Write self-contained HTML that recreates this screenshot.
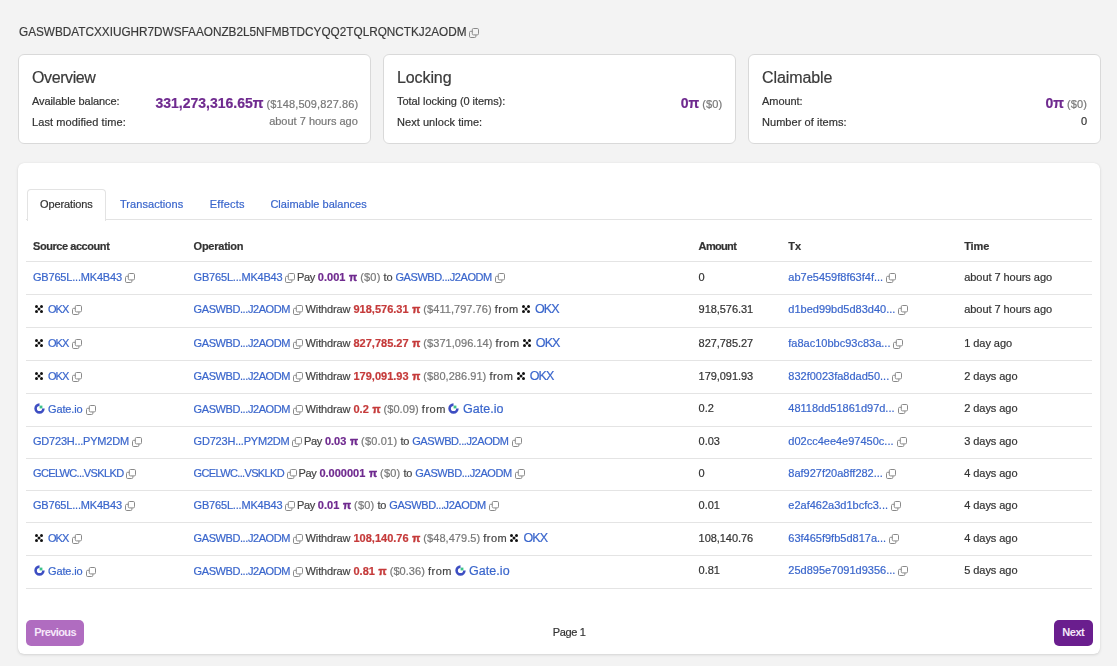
<!DOCTYPE html>
<html><head><meta charset="utf-8"><style>
html,body{margin:0;padding:0;}
body{width:1117px;height:666px;background:#f3f3f3;position:relative;overflow:hidden;font-family:"Liberation Sans", sans-serif;}
#wrap{position:absolute;left:0;top:0;width:1117px;height:666px;filter:blur(0.3px);}
.t{position:absolute;white-space:nowrap;-webkit-text-stroke:0.2px currentColor;}
.ic{position:absolute;line-height:0;}
.card{position:absolute;top:54px;width:351px;height:88px;background:#fff;border:1px solid #d9d9d9;border-radius:6px;}
.main{position:absolute;left:18px;top:163px;width:1082px;height:490.5px;background:#fff;border-radius:5px;border-radius:6px;box-shadow:0 0 1px rgba(0,0,0,0.12), 0 1px 3px rgba(0,0,0,0.13);}
.navline{position:absolute;left:26px;top:219px;width:1066px;height:1px;background:#e3e3e3;}
.tab{position:absolute;left:26.5px;top:189.4px;width:77.8px;height:31px;background:#fff;border-left:1px solid #e3e3e3;border-top:1px solid #e3e3e3;border-right:1px solid #e3e3e3;border-radius:4px 4px 0 0;}
.hl{position:absolute;left:26px;width:1066px;height:1px;background:#e4e4e4;}
.lk{color:#3a66cc;}
.pu{color:#6f2a8f;}
.rd{color:#c53a3a;}
.pi{font-size:10.5px;margin-left:0.6px;-webkit-text-stroke:0.5px currentColor;}
.gr{color:#777;}
svg.cp{display:inline-block;vertical-align:-1.5px;margin-left:3px;}
.ib{display:inline-block;width:12px;margin-right:3px;text-align:center;line-height:0;}
.ib svg{vertical-align:-1px;}
.btn{position:absolute;top:619.8px;height:26px;border-radius:5px;font-size:11px;line-height:25.5px;text-align:center;font-weight:700;}
.prev{left:26.2px;width:58px;background:#b06cc0;color:#f6e6fa;letter-spacing:-0.6px;}
.next{left:1054px;width:38.5px;background:#6a1e8e;color:#f4e8f8;letter-spacing:-0.5px;}
</style></head>
<body><div id="wrap">
<div class="t" style="left:19px;top:24.90px;font-size:13px;line-height:13px;color:#3a3a3a;transform:scaleX(0.905);transform-origin:0 0;">GASWBDATCXXIUGHR7DWSFAAONZB2L5NFMBTDCYQQ2TQLRQNCTKJ2AODM</div>
<div class="ic" style="left:466px;top:28.3px"><svg class="cp" width="10" height="10" viewBox="0 0 10 10"><rect x="0.5" y="3.3" width="6.4" height="6.2" rx="1.2" fill="#f3f3f3" stroke="#8a8a8a" stroke-width="1"/><rect x="3.3" y="0.5" width="6.2" height="6.4" rx="1.2" fill="#f3f3f3" stroke="#8a8a8a" stroke-width="1"/></svg></div>
<div class="card" style="left:18px"></div>
<div class="card" style="left:383px"></div>
<div class="card" style="left:748px"></div>
<div class="t" style="top:70px;font-size:16px;line-height:16px;color:#3a3a3a;font-weight:400;letter-spacing:-0.4px;left:32.00px;">Overview</div>
<div class="t" style="top:96px;font-size:11px;line-height:11px;color:#333;font-weight:400;letter-spacing:-0.09px;left:32.00px;">Available balance:</div>
<div class="t" style="top:117px;font-size:11px;line-height:11px;color:#333;font-weight:400;letter-spacing:0.08px;left:32.00px;">Last modified time:</div>
<div class="t" style="top:98px;font-size:11px;line-height:11px;color:#333;font-weight:400;right:758.80px;"><span style="font-size:14px;font-weight:700;color:#6f2a8f;letter-spacing:0">331,273,316.65π</span> <span style="color:#777;letter-spacing:0.1px">($148,509,827.86)</span></div>
<div class="t" style="top:116px;font-size:11px;line-height:11px;color:#777;font-weight:400;right:759.20px;">about 7 hours ago</div>
<div class="t" style="top:70px;font-size:16px;line-height:16px;color:#3a3a3a;font-weight:400;letter-spacing:-0.1px;left:397.00px;">Locking</div>
<div class="t" style="top:96px;font-size:11px;line-height:11px;color:#333;font-weight:400;letter-spacing:-0.05px;left:397.00px;">Total locking (0 items):</div>
<div class="t" style="top:117px;font-size:11px;line-height:11px;color:#333;font-weight:400;letter-spacing:0.05px;left:397.00px;">Next unlock time:</div>
<div class="t" style="top:98px;font-size:11px;line-height:11px;color:#333;font-weight:400;right:394.80px;"><span style="font-size:14px;font-weight:700;color:#6f2a8f;letter-spacing:0">0π</span> <span style="color:#777;letter-spacing:0.1px">($0)</span></div>
<div class="t" style="top:70px;font-size:16px;line-height:16px;color:#3a3a3a;font-weight:400;letter-spacing:-0.1px;left:762.00px;">Claimable</div>
<div class="t" style="top:96px;font-size:11px;line-height:11px;color:#333;font-weight:400;letter-spacing:-0.05px;left:762.00px;">Amount:</div>
<div class="t" style="top:117px;font-size:11px;line-height:11px;color:#333;font-weight:400;letter-spacing:0.05px;left:762.00px;">Number of items:</div>
<div class="t" style="top:98px;font-size:11px;line-height:11px;color:#333;font-weight:400;right:30.00px;"><span style="font-size:14px;font-weight:700;color:#6f2a8f;letter-spacing:0">0π</span> <span style="color:#777;letter-spacing:0.1px">($0)</span></div>
<div class="t" style="top:116px;font-size:11px;line-height:11px;color:#333;font-weight:400;right:30.00px;">0</div>
<div class="main"></div>
<div class="navline"></div>
<div class="tab"></div>
<div class="t" style="top:199px;font-size:11px;line-height:11px;color:#333;font-weight:400;letter-spacing:-0.12px;left:40.00px;">Operations</div>
<div class="t" style="top:199px;font-size:11px;line-height:11px;color:#3a66cc;font-weight:400;letter-spacing:0.06px;left:120.00px;">Transactions</div>
<div class="t" style="top:199px;font-size:11px;line-height:11px;color:#3a66cc;font-weight:400;letter-spacing:0.2px;left:209.80px;">Effects</div>
<div class="t" style="top:199px;font-size:11px;line-height:11px;color:#3a66cc;font-weight:400;letter-spacing:0.02px;left:270.40px;">Claimable balances</div>
<div class="t" style="top:241px;font-size:11px;line-height:11px;color:#333;font-weight:700;letter-spacing:-0.44px;left:33.00px;">Source account</div>
<div class="t" style="top:241px;font-size:11px;line-height:11px;color:#333;font-weight:700;letter-spacing:-0.25px;left:193.60px;">Operation</div>
<div class="t" style="top:241px;font-size:11px;line-height:11px;color:#333;font-weight:700;letter-spacing:-0.66px;left:698.60px;">Amount</div>
<div class="t" style="top:241px;font-size:11px;line-height:11px;color:#333;font-weight:700;left:788.30px;">Tx</div>
<div class="t" style="top:241px;font-size:11px;line-height:11px;color:#333;font-weight:700;letter-spacing:-0.1px;left:964.20px;">Time</div>
<div class="hl" style="top:261.35px"></div>
<div class="t" style="top:272px;font-size:11px;line-height:11px;color:#333;font-weight:400;left:33.00px;"><span class="lk" style="letter-spacing:-0.19px;">GB765L...MK4B43</span><svg class="cp" width="10" height="10" viewBox="0 0 10 10"><rect x="0.5" y="3.3" width="6.4" height="6.2" rx="1.2" fill="#fff" stroke="#8a8a8a" stroke-width="1"/><rect x="3.3" y="0.5" width="6.2" height="6.4" rx="1.2" fill="#fff" stroke="#8a8a8a" stroke-width="1"/></svg></div>
<div class="t" style="top:272px;font-size:11px;line-height:11px;color:#444;font-weight:400;left:193.60px;"><span class="lk" style="letter-spacing:-0.19px;">GB765L...MK4B43</span><svg class="cp" style="margin-right:-1.5px" width="10" height="10" viewBox="0 0 10 10"><rect x="0.5" y="3.3" width="6.4" height="6.2" rx="1.2" fill="#fff" stroke="#8a8a8a" stroke-width="1"/><rect x="3.3" y="0.5" width="6.2" height="6.4" rx="1.2" fill="#fff" stroke="#8a8a8a" stroke-width="1"/></svg> <span class="" style="letter-spacing:-0.4px;">Pay</span> <b class="pu">0.001 <span class="pi">π</span></b> <span class="gr" style="letter-spacing:0.2px;">($0)</span> <span class="" style="letter-spacing:-0.2px;">to</span> <span class="lk" style="letter-spacing:-0.42px;">GASWBD...J2AODM</span><svg class="cp" width="10" height="10" viewBox="0 0 10 10"><rect x="0.5" y="3.3" width="6.4" height="6.2" rx="1.2" fill="#fff" stroke="#8a8a8a" stroke-width="1"/><rect x="3.3" y="0.5" width="6.2" height="6.4" rx="1.2" fill="#fff" stroke="#8a8a8a" stroke-width="1"/></svg></div>
<div class="t" style="top:272px;font-size:11px;line-height:11px;color:#333;font-weight:400;letter-spacing:-0.05px;left:698.60px;">0</div>
<div class="t" style="top:272px;font-size:11px;line-height:11px;color:#333;font-weight:400;left:788.30px;"><span class="lk">ab7e5459f8f63f4f...</span><svg class="cp" width="10" height="10" viewBox="0 0 10 10"><rect x="0.5" y="3.3" width="6.4" height="6.2" rx="1.2" fill="#fff" stroke="#8a8a8a" stroke-width="1"/><rect x="3.3" y="0.5" width="6.2" height="6.4" rx="1.2" fill="#fff" stroke="#8a8a8a" stroke-width="1"/></svg></div>
<div class="t" style="top:272px;font-size:11px;line-height:11px;color:#333;font-weight:400;letter-spacing:-0.05px;left:964.20px;">about 7 hours ago</div>
<div class="hl" style="top:293.50px"></div>
<div class="t" style="top:304px;font-size:11px;line-height:11px;color:#333;font-weight:400;left:33.00px;"><span class="ib"><svg width="8" height="8" viewBox="0 0 8 8" style="vertical-align:0px"><g fill="#111"><circle cx="1.5" cy="1.5" r="1.5"/><circle cx="6.5" cy="1.5" r="1.5"/><circle cx="4" cy="4" r="1.5"/><circle cx="1.5" cy="6.5" r="1.5"/><circle cx="6.5" cy="6.5" r="1.5"/></g></svg></span><span class="lk" style="margin-right:1px;letter-spacing:-1.0px;">OKX</span><svg class="cp" width="10" height="10" viewBox="0 0 10 10"><rect x="0.5" y="3.3" width="6.4" height="6.2" rx="1.2" fill="#fff" stroke="#8a8a8a" stroke-width="1"/><rect x="3.3" y="0.5" width="6.2" height="6.4" rx="1.2" fill="#fff" stroke="#8a8a8a" stroke-width="1"/></svg></div>
<div class="t" style="top:304px;font-size:11px;line-height:11px;color:#444;font-weight:400;left:193.60px;"><span class="lk" style="letter-spacing:-0.42px;">GASWBD...J2AODM</span><svg class="cp" style="margin-right:-0.5px" width="10" height="10" viewBox="0 0 10 10"><rect x="0.5" y="3.3" width="6.4" height="6.2" rx="1.2" fill="#fff" stroke="#8a8a8a" stroke-width="1"/><rect x="3.3" y="0.5" width="6.2" height="6.4" rx="1.2" fill="#fff" stroke="#8a8a8a" stroke-width="1"/></svg> <span class="" style="letter-spacing:-0.12px;">Withdraw</span> <b class="rd">918,576.31 <span class="pi">π</span></b> <span class="gr" style="letter-spacing:0.05px;">($411,797.76)</span> <span class="" style="letter-spacing:0.5px;">from</span> <span class="ib" style="margin-left:-1.8px"><svg width="8" height="8" viewBox="0 0 8 8" style="vertical-align:0px"><g fill="#111"><circle cx="1.5" cy="1.5" r="1.5"/><circle cx="6.5" cy="1.5" r="1.5"/><circle cx="4" cy="4" r="1.5"/><circle cx="1.5" cy="6.5" r="1.5"/><circle cx="6.5" cy="6.5" r="1.5"/></g></svg></span><span class="lk" style="font-size:12.5px;letter-spacing:-0.9px;">OKX</span></div>
<div class="t" style="top:304px;font-size:11px;line-height:11px;color:#333;font-weight:400;letter-spacing:-0.05px;left:698.60px;">918,576.31</div>
<div class="t" style="top:304px;font-size:11px;line-height:11px;color:#333;font-weight:400;left:788.30px;"><span class="lk">d1bed99bd5d83d40...</span><svg class="cp" width="10" height="10" viewBox="0 0 10 10"><rect x="0.5" y="3.3" width="6.4" height="6.2" rx="1.2" fill="#fff" stroke="#8a8a8a" stroke-width="1"/><rect x="3.3" y="0.5" width="6.2" height="6.4" rx="1.2" fill="#fff" stroke="#8a8a8a" stroke-width="1"/></svg></div>
<div class="t" style="top:304px;font-size:11px;line-height:11px;color:#333;font-weight:400;letter-spacing:-0.05px;left:964.20px;">about 7 hours ago</div>
<div class="hl" style="top:326.50px"></div>
<div class="t" style="top:338px;font-size:11px;line-height:11px;color:#333;font-weight:400;left:33.00px;"><span class="ib"><svg width="8" height="8" viewBox="0 0 8 8" style="vertical-align:0px"><g fill="#111"><circle cx="1.5" cy="1.5" r="1.5"/><circle cx="6.5" cy="1.5" r="1.5"/><circle cx="4" cy="4" r="1.5"/><circle cx="1.5" cy="6.5" r="1.5"/><circle cx="6.5" cy="6.5" r="1.5"/></g></svg></span><span class="lk" style="margin-right:1px;letter-spacing:-1.0px;">OKX</span><svg class="cp" width="10" height="10" viewBox="0 0 10 10"><rect x="0.5" y="3.3" width="6.4" height="6.2" rx="1.2" fill="#fff" stroke="#8a8a8a" stroke-width="1"/><rect x="3.3" y="0.5" width="6.2" height="6.4" rx="1.2" fill="#fff" stroke="#8a8a8a" stroke-width="1"/></svg></div>
<div class="t" style="top:338px;font-size:11px;line-height:11px;color:#444;font-weight:400;left:193.60px;"><span class="lk" style="letter-spacing:-0.42px;">GASWBD...J2AODM</span><svg class="cp" style="margin-right:-0.5px" width="10" height="10" viewBox="0 0 10 10"><rect x="0.5" y="3.3" width="6.4" height="6.2" rx="1.2" fill="#fff" stroke="#8a8a8a" stroke-width="1"/><rect x="3.3" y="0.5" width="6.2" height="6.4" rx="1.2" fill="#fff" stroke="#8a8a8a" stroke-width="1"/></svg> <span class="" style="letter-spacing:-0.12px;">Withdraw</span> <b class="rd">827,785.27 <span class="pi">π</span></b> <span class="gr" style="letter-spacing:0.05px;">($371,096.14)</span> <span class="" style="letter-spacing:0.5px;">from</span> <span class="ib" style="margin-left:-1.8px"><svg width="8" height="8" viewBox="0 0 8 8" style="vertical-align:0px"><g fill="#111"><circle cx="1.5" cy="1.5" r="1.5"/><circle cx="6.5" cy="1.5" r="1.5"/><circle cx="4" cy="4" r="1.5"/><circle cx="1.5" cy="6.5" r="1.5"/><circle cx="6.5" cy="6.5" r="1.5"/></g></svg></span><span class="lk" style="font-size:12.5px;letter-spacing:-0.9px;">OKX</span></div>
<div class="t" style="top:338px;font-size:11px;line-height:11px;color:#333;font-weight:400;letter-spacing:-0.05px;left:698.60px;">827,785.27</div>
<div class="t" style="top:338px;font-size:11px;line-height:11px;color:#333;font-weight:400;left:788.30px;"><span class="lk">fa8ac10bbc93c83a...</span><svg class="cp" width="10" height="10" viewBox="0 0 10 10"><rect x="0.5" y="3.3" width="6.4" height="6.2" rx="1.2" fill="#fff" stroke="#8a8a8a" stroke-width="1"/><rect x="3.3" y="0.5" width="6.2" height="6.4" rx="1.2" fill="#fff" stroke="#8a8a8a" stroke-width="1"/></svg></div>
<div class="t" style="top:338px;font-size:11px;line-height:11px;color:#333;font-weight:400;letter-spacing:-0.05px;left:964.20px;">1 day ago</div>
<div class="hl" style="top:359.50px"></div>
<div class="t" style="top:371px;font-size:11px;line-height:11px;color:#333;font-weight:400;left:33.00px;"><span class="ib"><svg width="8" height="8" viewBox="0 0 8 8" style="vertical-align:0px"><g fill="#111"><circle cx="1.5" cy="1.5" r="1.5"/><circle cx="6.5" cy="1.5" r="1.5"/><circle cx="4" cy="4" r="1.5"/><circle cx="1.5" cy="6.5" r="1.5"/><circle cx="6.5" cy="6.5" r="1.5"/></g></svg></span><span class="lk" style="margin-right:1px;letter-spacing:-1.0px;">OKX</span><svg class="cp" width="10" height="10" viewBox="0 0 10 10"><rect x="0.5" y="3.3" width="6.4" height="6.2" rx="1.2" fill="#fff" stroke="#8a8a8a" stroke-width="1"/><rect x="3.3" y="0.5" width="6.2" height="6.4" rx="1.2" fill="#fff" stroke="#8a8a8a" stroke-width="1"/></svg></div>
<div class="t" style="top:371px;font-size:11px;line-height:11px;color:#444;font-weight:400;left:193.60px;"><span class="lk" style="letter-spacing:-0.42px;">GASWBD...J2AODM</span><svg class="cp" style="margin-right:-0.5px" width="10" height="10" viewBox="0 0 10 10"><rect x="0.5" y="3.3" width="6.4" height="6.2" rx="1.2" fill="#fff" stroke="#8a8a8a" stroke-width="1"/><rect x="3.3" y="0.5" width="6.2" height="6.4" rx="1.2" fill="#fff" stroke="#8a8a8a" stroke-width="1"/></svg> <span class="" style="letter-spacing:-0.12px;">Withdraw</span> <b class="rd">179,091.93 <span class="pi">π</span></b> <span class="gr" style="letter-spacing:0.05px;">($80,286.91)</span> <span class="" style="letter-spacing:0.5px;">from</span> <span class="ib" style="margin-left:-1.8px"><svg width="8" height="8" viewBox="0 0 8 8" style="vertical-align:0px"><g fill="#111"><circle cx="1.5" cy="1.5" r="1.5"/><circle cx="6.5" cy="1.5" r="1.5"/><circle cx="4" cy="4" r="1.5"/><circle cx="1.5" cy="6.5" r="1.5"/><circle cx="6.5" cy="6.5" r="1.5"/></g></svg></span><span class="lk" style="font-size:12.5px;letter-spacing:-0.9px;">OKX</span></div>
<div class="t" style="top:371px;font-size:11px;line-height:11px;color:#333;font-weight:400;letter-spacing:-0.05px;left:698.60px;">179,091.93</div>
<div class="t" style="top:371px;font-size:11px;line-height:11px;color:#333;font-weight:400;left:788.30px;"><span class="lk">832f0023fa8dad50...</span><svg class="cp" width="10" height="10" viewBox="0 0 10 10"><rect x="0.5" y="3.3" width="6.4" height="6.2" rx="1.2" fill="#fff" stroke="#8a8a8a" stroke-width="1"/><rect x="3.3" y="0.5" width="6.2" height="6.4" rx="1.2" fill="#fff" stroke="#8a8a8a" stroke-width="1"/></svg></div>
<div class="t" style="top:371px;font-size:11px;line-height:11px;color:#333;font-weight:400;letter-spacing:-0.05px;left:964.20px;">2 days ago</div>
<div class="hl" style="top:392.50px"></div>
<div class="t" style="top:403px;font-size:11px;line-height:11px;color:#333;font-weight:400;left:33.00px;"><span class="ib"><svg width="11" height="11" viewBox="0 0 11 11"><path d="M5.5 0.3 A5.2 5.2 0 1 0 10.7 5.5 L8.1 5.5 A2.6 2.6 0 1 1 5.5 2.9 Z" fill="#3d4ec2"/><rect x="5.6" y="2.6" width="2.8" height="2.8" fill="#3ec38c"/></svg></span><span class="lk" style="letter-spacing:-0.13px;">Gate.io</span><svg class="cp" width="10" height="10" viewBox="0 0 10 10"><rect x="0.5" y="3.3" width="6.4" height="6.2" rx="1.2" fill="#fff" stroke="#8a8a8a" stroke-width="1"/><rect x="3.3" y="0.5" width="6.2" height="6.4" rx="1.2" fill="#fff" stroke="#8a8a8a" stroke-width="1"/></svg></div>
<div class="t" style="top:403px;font-size:11px;line-height:11px;color:#444;font-weight:400;left:193.60px;"><span class="lk" style="letter-spacing:-0.42px;">GASWBD...J2AODM</span><svg class="cp" style="margin-right:-0.5px" width="10" height="10" viewBox="0 0 10 10"><rect x="0.5" y="3.3" width="6.4" height="6.2" rx="1.2" fill="#fff" stroke="#8a8a8a" stroke-width="1"/><rect x="3.3" y="0.5" width="6.2" height="6.4" rx="1.2" fill="#fff" stroke="#8a8a8a" stroke-width="1"/></svg> <span class="" style="letter-spacing:-0.12px;">Withdraw</span> <b class="rd">0.2 <span class="pi">π</span></b> <span class="gr" style="letter-spacing:0.05px;">($0.09)</span> <span class="" style="letter-spacing:0.5px;">from</span> <span class="ib" style="margin-left:-1px"><svg width="11" height="11" viewBox="0 0 11 11"><path d="M5.5 0.3 A5.2 5.2 0 1 0 10.7 5.5 L8.1 5.5 A2.6 2.6 0 1 1 5.5 2.9 Z" fill="#3d4ec2"/><rect x="5.6" y="2.6" width="2.8" height="2.8" fill="#3ec38c"/></svg></span><span class="lk" style="font-size:12.5px;letter-spacing:0.05px;">Gate.io</span></div>
<div class="t" style="top:403px;font-size:11px;line-height:11px;color:#333;font-weight:400;letter-spacing:-0.05px;left:698.60px;">0.2</div>
<div class="t" style="top:403px;font-size:11px;line-height:11px;color:#333;font-weight:400;left:788.30px;"><span class="lk">48118dd51861d97d...</span><svg class="cp" width="10" height="10" viewBox="0 0 10 10"><rect x="0.5" y="3.3" width="6.4" height="6.2" rx="1.2" fill="#fff" stroke="#8a8a8a" stroke-width="1"/><rect x="3.3" y="0.5" width="6.2" height="6.4" rx="1.2" fill="#fff" stroke="#8a8a8a" stroke-width="1"/></svg></div>
<div class="t" style="top:403px;font-size:11px;line-height:11px;color:#333;font-weight:400;letter-spacing:-0.05px;left:964.20px;">2 days ago</div>
<div class="hl" style="top:425.50px"></div>
<div class="t" style="top:436px;font-size:11px;line-height:11px;color:#333;font-weight:400;left:33.00px;"><span class="lk" style="letter-spacing:-0.21px;">GD723H...PYM2DM</span><svg class="cp" width="10" height="10" viewBox="0 0 10 10"><rect x="0.5" y="3.3" width="6.4" height="6.2" rx="1.2" fill="#fff" stroke="#8a8a8a" stroke-width="1"/><rect x="3.3" y="0.5" width="6.2" height="6.4" rx="1.2" fill="#fff" stroke="#8a8a8a" stroke-width="1"/></svg></div>
<div class="t" style="top:436px;font-size:11px;line-height:11px;color:#444;font-weight:400;left:193.60px;"><span class="lk" style="letter-spacing:-0.21px;">GD723H...PYM2DM</span><svg class="cp" style="margin-right:-1.5px" width="10" height="10" viewBox="0 0 10 10"><rect x="0.5" y="3.3" width="6.4" height="6.2" rx="1.2" fill="#fff" stroke="#8a8a8a" stroke-width="1"/><rect x="3.3" y="0.5" width="6.2" height="6.4" rx="1.2" fill="#fff" stroke="#8a8a8a" stroke-width="1"/></svg> <span class="" style="letter-spacing:-0.4px;">Pay</span> <b class="pu">0.03 <span class="pi">π</span></b> <span class="gr" style="letter-spacing:0.2px;">($0.01)</span> <span class="" style="letter-spacing:-0.2px;">to</span> <span class="lk" style="letter-spacing:-0.42px;">GASWBD...J2AODM</span><svg class="cp" width="10" height="10" viewBox="0 0 10 10"><rect x="0.5" y="3.3" width="6.4" height="6.2" rx="1.2" fill="#fff" stroke="#8a8a8a" stroke-width="1"/><rect x="3.3" y="0.5" width="6.2" height="6.4" rx="1.2" fill="#fff" stroke="#8a8a8a" stroke-width="1"/></svg></div>
<div class="t" style="top:436px;font-size:11px;line-height:11px;color:#333;font-weight:400;letter-spacing:-0.05px;left:698.60px;">0.03</div>
<div class="t" style="top:436px;font-size:11px;line-height:11px;color:#333;font-weight:400;left:788.30px;"><span class="lk">d02cc4ee4e97450c...</span><svg class="cp" width="10" height="10" viewBox="0 0 10 10"><rect x="0.5" y="3.3" width="6.4" height="6.2" rx="1.2" fill="#fff" stroke="#8a8a8a" stroke-width="1"/><rect x="3.3" y="0.5" width="6.2" height="6.4" rx="1.2" fill="#fff" stroke="#8a8a8a" stroke-width="1"/></svg></div>
<div class="t" style="top:436px;font-size:11px;line-height:11px;color:#333;font-weight:400;letter-spacing:-0.05px;left:964.20px;">3 days ago</div>
<div class="hl" style="top:457.65px"></div>
<div class="t" style="top:468px;font-size:11px;line-height:11px;color:#333;font-weight:400;left:33.00px;"><span class="lk" style="letter-spacing:-0.64px;">GCELWC...VSKLKD</span><svg class="cp" width="10" height="10" viewBox="0 0 10 10"><rect x="0.5" y="3.3" width="6.4" height="6.2" rx="1.2" fill="#fff" stroke="#8a8a8a" stroke-width="1"/><rect x="3.3" y="0.5" width="6.2" height="6.4" rx="1.2" fill="#fff" stroke="#8a8a8a" stroke-width="1"/></svg></div>
<div class="t" style="top:468px;font-size:11px;line-height:11px;color:#444;font-weight:400;left:193.60px;"><span class="lk" style="letter-spacing:-0.64px;">GCELWC...VSKLKD</span><svg class="cp" style="margin-right:-1.5px" width="10" height="10" viewBox="0 0 10 10"><rect x="0.5" y="3.3" width="6.4" height="6.2" rx="1.2" fill="#fff" stroke="#8a8a8a" stroke-width="1"/><rect x="3.3" y="0.5" width="6.2" height="6.4" rx="1.2" fill="#fff" stroke="#8a8a8a" stroke-width="1"/></svg> <span class="" style="letter-spacing:-0.4px;">Pay</span> <b class="pu">0.000001 <span class="pi">π</span></b> <span class="gr" style="letter-spacing:0.2px;">($0)</span> <span class="" style="letter-spacing:-0.2px;">to</span> <span class="lk" style="letter-spacing:-0.42px;">GASWBD...J2AODM</span><svg class="cp" width="10" height="10" viewBox="0 0 10 10"><rect x="0.5" y="3.3" width="6.4" height="6.2" rx="1.2" fill="#fff" stroke="#8a8a8a" stroke-width="1"/><rect x="3.3" y="0.5" width="6.2" height="6.4" rx="1.2" fill="#fff" stroke="#8a8a8a" stroke-width="1"/></svg></div>
<div class="t" style="top:468px;font-size:11px;line-height:11px;color:#333;font-weight:400;letter-spacing:-0.05px;left:698.60px;">0</div>
<div class="t" style="top:468px;font-size:11px;line-height:11px;color:#333;font-weight:400;left:788.30px;"><span class="lk">8af927f20a8ff282...</span><svg class="cp" width="10" height="10" viewBox="0 0 10 10"><rect x="0.5" y="3.3" width="6.4" height="6.2" rx="1.2" fill="#fff" stroke="#8a8a8a" stroke-width="1"/><rect x="3.3" y="0.5" width="6.2" height="6.4" rx="1.2" fill="#fff" stroke="#8a8a8a" stroke-width="1"/></svg></div>
<div class="t" style="top:468px;font-size:11px;line-height:11px;color:#333;font-weight:400;letter-spacing:-0.05px;left:964.20px;">4 days ago</div>
<div class="hl" style="top:489.80px"></div>
<div class="t" style="top:500px;font-size:11px;line-height:11px;color:#333;font-weight:400;left:33.00px;"><span class="lk" style="letter-spacing:-0.19px;">GB765L...MK4B43</span><svg class="cp" width="10" height="10" viewBox="0 0 10 10"><rect x="0.5" y="3.3" width="6.4" height="6.2" rx="1.2" fill="#fff" stroke="#8a8a8a" stroke-width="1"/><rect x="3.3" y="0.5" width="6.2" height="6.4" rx="1.2" fill="#fff" stroke="#8a8a8a" stroke-width="1"/></svg></div>
<div class="t" style="top:500px;font-size:11px;line-height:11px;color:#444;font-weight:400;left:193.60px;"><span class="lk" style="letter-spacing:-0.19px;">GB765L...MK4B43</span><svg class="cp" style="margin-right:-1.5px" width="10" height="10" viewBox="0 0 10 10"><rect x="0.5" y="3.3" width="6.4" height="6.2" rx="1.2" fill="#fff" stroke="#8a8a8a" stroke-width="1"/><rect x="3.3" y="0.5" width="6.2" height="6.4" rx="1.2" fill="#fff" stroke="#8a8a8a" stroke-width="1"/></svg> <span class="" style="letter-spacing:-0.4px;">Pay</span> <b class="pu">0.01 <span class="pi">π</span></b> <span class="gr" style="letter-spacing:0.2px;">($0)</span> <span class="" style="letter-spacing:-0.2px;">to</span> <span class="lk" style="letter-spacing:-0.42px;">GASWBD...J2AODM</span><svg class="cp" width="10" height="10" viewBox="0 0 10 10"><rect x="0.5" y="3.3" width="6.4" height="6.2" rx="1.2" fill="#fff" stroke="#8a8a8a" stroke-width="1"/><rect x="3.3" y="0.5" width="6.2" height="6.4" rx="1.2" fill="#fff" stroke="#8a8a8a" stroke-width="1"/></svg></div>
<div class="t" style="top:500px;font-size:11px;line-height:11px;color:#333;font-weight:400;letter-spacing:-0.05px;left:698.60px;">0.01</div>
<div class="t" style="top:500px;font-size:11px;line-height:11px;color:#333;font-weight:400;left:788.30px;"><span class="lk">e2af462a3d1bcfc3...</span><svg class="cp" width="10" height="10" viewBox="0 0 10 10"><rect x="0.5" y="3.3" width="6.4" height="6.2" rx="1.2" fill="#fff" stroke="#8a8a8a" stroke-width="1"/><rect x="3.3" y="0.5" width="6.2" height="6.4" rx="1.2" fill="#fff" stroke="#8a8a8a" stroke-width="1"/></svg></div>
<div class="t" style="top:500px;font-size:11px;line-height:11px;color:#333;font-weight:400;letter-spacing:-0.05px;left:964.20px;">4 days ago</div>
<div class="hl" style="top:521.95px"></div>
<div class="t" style="top:533px;font-size:11px;line-height:11px;color:#333;font-weight:400;left:33.00px;"><span class="ib"><svg width="8" height="8" viewBox="0 0 8 8" style="vertical-align:0px"><g fill="#111"><circle cx="1.5" cy="1.5" r="1.5"/><circle cx="6.5" cy="1.5" r="1.5"/><circle cx="4" cy="4" r="1.5"/><circle cx="1.5" cy="6.5" r="1.5"/><circle cx="6.5" cy="6.5" r="1.5"/></g></svg></span><span class="lk" style="margin-right:1px;letter-spacing:-1.0px;">OKX</span><svg class="cp" width="10" height="10" viewBox="0 0 10 10"><rect x="0.5" y="3.3" width="6.4" height="6.2" rx="1.2" fill="#fff" stroke="#8a8a8a" stroke-width="1"/><rect x="3.3" y="0.5" width="6.2" height="6.4" rx="1.2" fill="#fff" stroke="#8a8a8a" stroke-width="1"/></svg></div>
<div class="t" style="top:533px;font-size:11px;line-height:11px;color:#444;font-weight:400;left:193.60px;"><span class="lk" style="letter-spacing:-0.42px;">GASWBD...J2AODM</span><svg class="cp" style="margin-right:-0.5px" width="10" height="10" viewBox="0 0 10 10"><rect x="0.5" y="3.3" width="6.4" height="6.2" rx="1.2" fill="#fff" stroke="#8a8a8a" stroke-width="1"/><rect x="3.3" y="0.5" width="6.2" height="6.4" rx="1.2" fill="#fff" stroke="#8a8a8a" stroke-width="1"/></svg> <span class="" style="letter-spacing:-0.12px;">Withdraw</span> <b class="rd">108,140.76 <span class="pi">π</span></b> <span class="gr" style="letter-spacing:0.05px;">($48,479.5)</span> <span class="" style="letter-spacing:0.5px;">from</span> <span class="ib" style="margin-left:-1.8px"><svg width="8" height="8" viewBox="0 0 8 8" style="vertical-align:0px"><g fill="#111"><circle cx="1.5" cy="1.5" r="1.5"/><circle cx="6.5" cy="1.5" r="1.5"/><circle cx="4" cy="4" r="1.5"/><circle cx="1.5" cy="6.5" r="1.5"/><circle cx="6.5" cy="6.5" r="1.5"/></g></svg></span><span class="lk" style="font-size:12.5px;letter-spacing:-0.9px;">OKX</span></div>
<div class="t" style="top:533px;font-size:11px;line-height:11px;color:#333;font-weight:400;letter-spacing:-0.05px;left:698.60px;">108,140.76</div>
<div class="t" style="top:533px;font-size:11px;line-height:11px;color:#333;font-weight:400;left:788.30px;"><span class="lk">63f465f9fb5d817a...</span><svg class="cp" width="10" height="10" viewBox="0 0 10 10"><rect x="0.5" y="3.3" width="6.4" height="6.2" rx="1.2" fill="#fff" stroke="#8a8a8a" stroke-width="1"/><rect x="3.3" y="0.5" width="6.2" height="6.4" rx="1.2" fill="#fff" stroke="#8a8a8a" stroke-width="1"/></svg></div>
<div class="t" style="top:533px;font-size:11px;line-height:11px;color:#333;font-weight:400;letter-spacing:-0.05px;left:964.20px;">4 days ago</div>
<div class="hl" style="top:554.95px"></div>
<div class="t" style="top:565px;font-size:11px;line-height:11px;color:#333;font-weight:400;left:33.00px;"><span class="ib"><svg width="11" height="11" viewBox="0 0 11 11"><path d="M5.5 0.3 A5.2 5.2 0 1 0 10.7 5.5 L8.1 5.5 A2.6 2.6 0 1 1 5.5 2.9 Z" fill="#3d4ec2"/><rect x="5.6" y="2.6" width="2.8" height="2.8" fill="#3ec38c"/></svg></span><span class="lk" style="letter-spacing:-0.13px;">Gate.io</span><svg class="cp" width="10" height="10" viewBox="0 0 10 10"><rect x="0.5" y="3.3" width="6.4" height="6.2" rx="1.2" fill="#fff" stroke="#8a8a8a" stroke-width="1"/><rect x="3.3" y="0.5" width="6.2" height="6.4" rx="1.2" fill="#fff" stroke="#8a8a8a" stroke-width="1"/></svg></div>
<div class="t" style="top:565px;font-size:11px;line-height:11px;color:#444;font-weight:400;left:193.60px;"><span class="lk" style="letter-spacing:-0.42px;">GASWBD...J2AODM</span><svg class="cp" style="margin-right:-0.5px" width="10" height="10" viewBox="0 0 10 10"><rect x="0.5" y="3.3" width="6.4" height="6.2" rx="1.2" fill="#fff" stroke="#8a8a8a" stroke-width="1"/><rect x="3.3" y="0.5" width="6.2" height="6.4" rx="1.2" fill="#fff" stroke="#8a8a8a" stroke-width="1"/></svg> <span class="" style="letter-spacing:-0.12px;">Withdraw</span> <b class="rd">0.81 <span class="pi">π</span></b> <span class="gr" style="letter-spacing:0.05px;">($0.36)</span> <span class="" style="letter-spacing:0.5px;">from</span> <span class="ib" style="margin-left:-1px"><svg width="11" height="11" viewBox="0 0 11 11"><path d="M5.5 0.3 A5.2 5.2 0 1 0 10.7 5.5 L8.1 5.5 A2.6 2.6 0 1 1 5.5 2.9 Z" fill="#3d4ec2"/><rect x="5.6" y="2.6" width="2.8" height="2.8" fill="#3ec38c"/></svg></span><span class="lk" style="font-size:12.5px;letter-spacing:0.05px;">Gate.io</span></div>
<div class="t" style="top:565px;font-size:11px;line-height:11px;color:#333;font-weight:400;letter-spacing:-0.05px;left:698.60px;">0.81</div>
<div class="t" style="top:565px;font-size:11px;line-height:11px;color:#333;font-weight:400;left:788.30px;"><span class="lk">25d895e7091d9356...</span><svg class="cp" width="10" height="10" viewBox="0 0 10 10"><rect x="0.5" y="3.3" width="6.4" height="6.2" rx="1.2" fill="#fff" stroke="#8a8a8a" stroke-width="1"/><rect x="3.3" y="0.5" width="6.2" height="6.4" rx="1.2" fill="#fff" stroke="#8a8a8a" stroke-width="1"/></svg></div>
<div class="t" style="top:565px;font-size:11px;line-height:11px;color:#333;font-weight:400;letter-spacing:-0.05px;left:964.20px;">5 days ago</div>
<div class="hl" style="top:587.95px"></div>
<div class="btn prev"><span>Previous</span></div>
<div class="btn next"><span>Next</span></div>
<div class="t" style="top:627px;font-size:11px;line-height:11px;color:#333;font-weight:400;letter-spacing:-0.35px;left:552.80px;">Page 1</div>

</div></body></html>
